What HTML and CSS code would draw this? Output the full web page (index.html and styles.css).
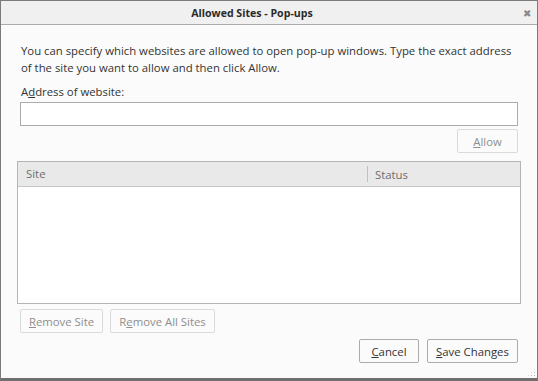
FILE: index.html
```html
<!doctype html>
<html lang="en">
<head>
    <meta charset="UTF-8">
    <title>Allowed Sites - Pop-ups</title>
    <link rel="stylesheet" href="styles.css">
</head>
<body>
<div class="window">
    <div class="titlebar">
        <span class="title">Allowed Sites - Pop-ups</span>
        <span class="close">&#x2716;</span>
    </div>
    <div class="content">
        <p class="intro">You can specify which websites are allowed to open pop-up windows. Type the exact address of the site you want to allow and then click Allow.</p>
        <label class="field-label" for="url">A<u>d</u>dress of website:</label>
        <input class="url-input" id="url" type="text">
        <div class="allow-row">
            <button class="btn disabled"><u>A</u>llow</button>
        </div>
        <div class="sites">
            <div class="sites-head">
                <div class="col col-site">Site</div>
                <div class="col col-status">Status</div>
            </div>
            <div class="sites-body"></div>
        </div>
        <div class="remove-row">
            <button class="btn disabled"><u>R</u>emove Site</button>
            <button class="btn disabled">R<u>e</u>move All Sites</button>
        </div>
        <div class="footer">
            <button class="btn"><u>C</u>ancel</button>
            <button class="btn"><u>S</u>ave Changes</button>
        </div>
    </div>
    <div class="grip"></div>
</div>
</body>
</html>
```

FILE: styles.css
```css
body {
    margin: 0;
    font-family: "Open Sans", "Noto Sans", sans-serif;
    font-size: 11.35px;
    color: #333;
    background: #fbfbfb;
}

.window {
    position: relative;
    width: 538px;
    height: 381px;
    box-sizing: border-box;
    border: 1px solid #7b7b7b;
    border-bottom: 3px solid #6f6f6f;
    display: flex;
    flex-direction: column;
    background: #fbfbfb;
}

.titlebar {
    height: 23px;
    padding-right: 34px;
    border-bottom: 1px solid #ababab;
    background: #f0f0f0;
    display: flex;
    align-items: center;
    justify-content: center;
    position: relative;
}

.title {
    font-weight: bold;
    font-size: 10.6px;
    color: #2b2b2b;
}

.close {
    position: absolute;
    right: 6px;
    top: 5px;
    font-size: 10px;
    color: #8a8a8a;
}

.content {
    flex: 1;
    display: flex;
    flex-direction: column;
    padding: 17px 19px 0 19px;
}

.intro {
    margin: 0 0 0 1px;
    line-height: 17px;
}

.field-label {
    margin: 7px 0 0 1px;
    line-height: 17px;
}

.url-input {
    margin-top: 2px;
    height: 24px;
    box-sizing: border-box;
    border: 1px solid #ababab;
    background: #fff;
    font: inherit;
}

.allow-row {
    display: flex;
    justify-content: flex-end;
    margin-top: 3px;
}

.btn {
    height: 24px;
    padding: 0;
    white-space: nowrap;
    border: 1px solid #acacac;
    border-radius: 2px;
    background: #fbfbfb;
    font: inherit;
    color: #333;
}

.btn.disabled {
    border-color: #dadada;
    color: #8e8e8e;
}

.allow-row .btn {
    width: 61px;
}

.sites {
    margin: 8px -3px 0 -3px;
    height: 143px;
    box-sizing: border-box;
    border: 1px solid #b4b4b4;
    background: #fff;
    display: flex;
    flex-direction: column;
}

.sites-head {
    height: 24px;
    border-bottom: 1px solid #c6c6c6;
    background: #e9e9e9;
    display: flex;
    align-items: center;
    color: #6e6e6e;
}

.col-site {
    box-sizing: border-box;
    width: 350px;
    padding-left: 8px;
    border-right: 1px solid #c2c2c2;
    line-height: 16px;
}

.col-status {
    padding-left: 7px;
}

.remove-row {
    display: flex;
    gap: 7px;
    margin-top: 5px;
}

.remove-row .btn:first-child {
    width: 83px;
}

.remove-row .btn:last-child {
    width: 105px;
}

.footer {
    display: flex;
    justify-content: flex-end;
    gap: 8px;
    margin-top: 6px;
}

.footer .btn:first-child {
    width: 60px;
}

.footer .btn:last-child {
    width: 91px;
}

.grip {
    position: absolute;
    right: 1px;
    bottom: 1px;
    width: 9px;
    height: 9px;
    background:
        radial-gradient(circle, #b8b8b8 1px, transparent 1px) 0 0 / 3px 3px;
    clip-path: polygon(100% 0, 100% 100%, 0 100%);
}
```
